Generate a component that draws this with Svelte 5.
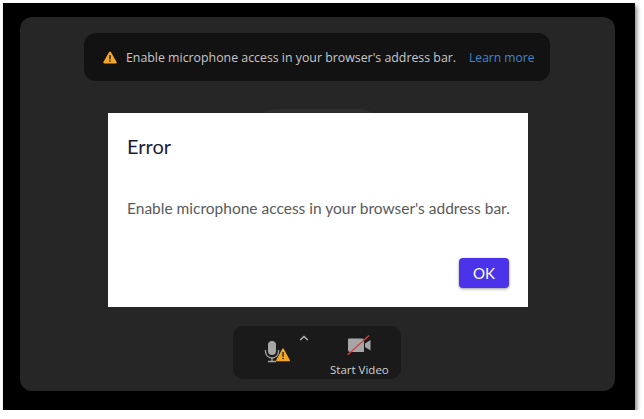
<script>
  let message = "Enable microphone access in your browser's address bar.";
</script>

<div class="frame">
  <div class="panel">
    <div class="banner">
      <svg class="warn" viewBox="0 0 14 13" width="14" height="13">
        <path d="M7 .6c.4 0 .7.2.9.5l5.7 10c.4.7-.1 1.5-.9 1.5H1.3c-.8 0-1.3-.8-.9-1.5l5.7-10c.2-.3.5-.5.9-.5z" fill="#f5a623" />
        <rect x="6.3" y="4" width="1.4" height="4.4" fill="#1a1a1a" />
        <rect x="6.3" y="9.3" width="1.4" height="1.4" fill="#1a1a1a" />
      </svg>
      <span class="banner-text">{message}</span>
      <span class="learn">Learn more</span>
    </div>

    <div class="bump"></div>

    <div class="toolbar">
      <div class="tool mic">
        <svg viewBox="0 0 28 24" width="28" height="24">
          <rect x="5" y="1" width="8" height="14" rx="4" fill="#a6a6a6" />
          <path d="M2.5 10v1.5a6.5 6.5 0 0 0 13 0V10" fill="none" stroke="#a6a6a6" stroke-width="1.3" />
          <path d="M9 18v3.2M5 21.5h8" fill="none" stroke="#a6a6a6" stroke-width="1.3" />
          <path d="M20 8.5c.3 0 .6.2.8.4l6 11c.4.6-.1 1.4-.8 1.4H14c-.7 0-1.2-.8-.8-1.4l6-11c.2-.2.5-.4.8-.4z" fill="#f5a623" />
          <rect x="19.4" y="12" width="1.3" height="4.8" fill="#1a1a1a" />
          <rect x="19.4" y="17.8" width="1.3" height="1.4" fill="#1a1a1a" />
        </svg>
        <svg class="caret" viewBox="0 0 10 6" width="10" height="6">
          <path d="M1.2 5 5 1.4 8.8 5" fill="none" stroke="#b5b5b5" stroke-width="1.4" />
        </svg>
      </div>
      <div class="tool video">
        <svg viewBox="0 0 26 20" width="26" height="20">
          <path d="M3 3.5h13a2 2 0 0 1 2 2V17H4a2 2 0 0 1-2-2V4.5a1 1 0 0 1 1-1z" fill="#a6a6a6" />
          <path d="M19 8.5 24.5 5v10.5L19 12z" fill="#a6a6a6" />
          <path d="M1.5 20 23 .5" stroke="#d0413f" stroke-width="1.3" />
        </svg>
        <span class="tool-label">Start Video</span>
      </div>
    </div>

    <div class="dialog">
      <h2>Error</h2>
      <p>{message}</p>
      <div class="actions">
        <button>OK</button>
      </div>
    </div>
  </div>
</div>

<style>
  :global(body) {
    background: #fff;
  }
  .frame {
    width: 632px;
    height: 407px;
    margin: 3px 0 0 3px;
    box-sizing: border-box;
    padding: 14px 20px 19px 17px;
    background: #000;
    box-shadow: 2px 3px 4px #8a8a8a;
  }
  .panel {
    position: relative;
    height: 100%;
    box-sizing: border-box;
    padding: 16px 0 12px;
    display: flex;
    flex-direction: column;
    align-items: center;
    background: #262626;
    border-radius: 12px;
  }
  .banner {
    width: 466px;
    height: 48px;
    margin-right: 1px;
    box-sizing: border-box;
    padding-left: 19px;
    display: flex;
    align-items: center;
    background: #121212;
    border-radius: 12px;
    font: 12.35px "Open Sans", sans-serif;
  }
  .warn {
    margin-right: 9px;
  }
  .banner-text {
    color: #c8c8c8;
  }
  .learn {
    margin-left: 13px;
    color: #3f86c9;
    font-size: 12.1px;
  }
  .bump {
    width: 125px;
    height: 40px;
    margin-top: 28px;
    background: #2e2e2e;
    border-radius: 20px;
  }
  .toolbar {
    width: 168px;
    height: 53px;
    margin-top: auto;
    margin-right: 1px;
    box-sizing: border-box;
    padding: 0 0 2px 30px;
    display: flex;
    align-items: flex-end;
    background: #1a1a1a;
    border-radius: 10px;
  }
  .tool {
    display: flex;
  }
  .mic {
    width: 67px;
    padding-bottom: 13px;
    align-items: flex-start;
    gap: 8px;
  }
  .caret {
    margin-top: -5px;
  }
  .video {
    flex-direction: column;
    align-items: center;
    gap: 7px;
  }
  .tool-label {
    color: #d0d0d0;
    font: 11.5px "Open Sans", sans-serif;
    white-space: nowrap;
  }
  .dialog {
    position: absolute;
    left: 88px;
    top: 96px;
    width: 420px;
    height: 194px;
    box-sizing: border-box;
    padding: 21px 19px 19px;
    display: flex;
    flex-direction: column;
    background: #fff;
    font-family: Lato, sans-serif;
  }
  h2 {
    margin: 0;
    color: #1c1c3a;
    font-size: 20px;
    font-weight: 400;
    line-height: 24px;
  }
  p {
    margin: 40px 0 0;
    color: #5a5a5a;
    font-size: 15.5px;
    line-height: 20px;
    white-space: nowrap;
  }
  .actions {
    margin-top: auto;
    display: flex;
    justify-content: flex-end;
  }
  button {
    width: 50px;
    height: 30px;
    padding: 0;
    border: none;
    border-radius: 4px;
    background: #4a33e8;
    color: #fff;
    font: 15px Lato, sans-serif;
    box-shadow: 0 1px 3px #0006;
  }
</style>
